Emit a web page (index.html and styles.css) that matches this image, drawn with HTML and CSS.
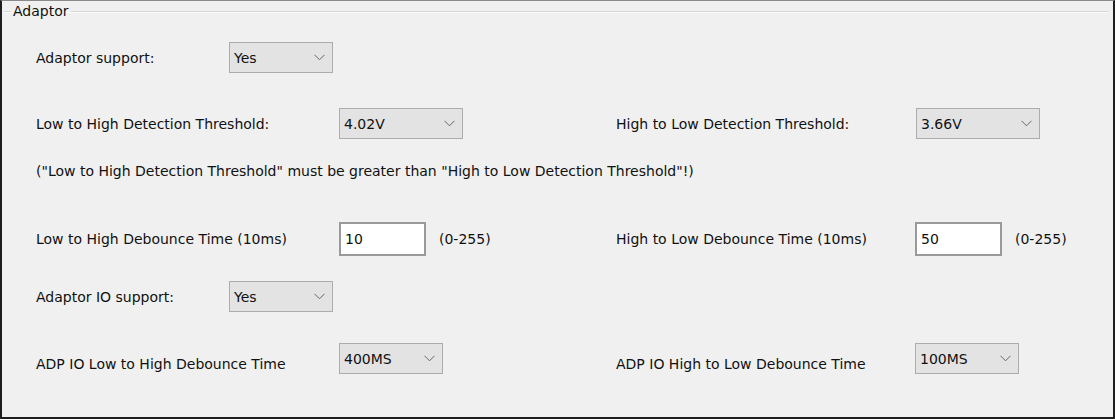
FILE: index.html
```html
<html lang="en"><head>
    <meta charset="UTF-8">
    <title>Adaptor</title>
    <link rel="stylesheet" href="styles.css">
</head>
<body>
    <div class="frame">
        <fieldset class="group">
            <legend>Adaptor</legend>

            <!-- Adaptor support -->
            <div class="row row-support">
                <span class="label label-short">Adaptor support:</span>
                <div class="combo combo-short"><span>Yes</span><svg width="11" height="7" viewBox="0 0 11 7"><polyline points="0.5,0.8 5.5,5.8 10.5,0.8" fill="none" stroke="#666" stroke-width="1"/></svg></div>
            </div>

            <!-- Detection thresholds -->
            <div class="row row-threshold">
                <div class="half">
                    <span class="label label-long">Low to High Detection Threshold:</span>
                    <div class="combo combo-wide"><span>4.02V</span><svg width="11" height="7" viewBox="0 0 11 7"><polyline points="0.5,0.8 5.5,5.8 10.5,0.8" fill="none" stroke="#666" stroke-width="1"/></svg></div>
                </div>
                <div class="half half-right">
                    <span class="label label-right">High to Low Detection Threshold:</span>
                    <div class="combo combo-wide"><span>3.66V</span><svg width="11" height="7" viewBox="0 0 11 7"><polyline points="0.5,0.8 5.5,5.8 10.5,0.8" fill="none" stroke="#666" stroke-width="1"/></svg></div>
                </div>
            </div>

            <p class="note">("Low to High Detection Threshold" must be greater than "High to Low Detection Threshold"!)</p>

            <!-- Debounce times -->
            <div class="row row-debounce">
                <div class="half">
                    <span class="label label-long">Low to High Debounce Time (10ms)</span>
                    <input type="text" class="num" value="10">
                    <span class="range">(0-255)</span>
                </div>
                <div class="half half-right">
                    <span class="label label-right label-tight">High to Low Debounce Time (10ms)</span>
                    <input type="text" class="num" value="50">
                    <span class="range">(0-255)</span>
                </div>
            </div>

            <!-- Adaptor IO -->
            <div class="row row-io">
                <span class="label label-short">Adaptor IO support:</span>
                <div class="combo combo-short"><span>Yes</span><svg width="11" height="7" viewBox="0 0 11 7"><polyline points="0.5,0.8 5.5,5.8 10.5,0.8" fill="none" stroke="#666" stroke-width="1"/></svg></div>
            </div>

            <div class="row row-adp">
                <div class="half">
                    <span class="label label-long label-low">ADP IO Low to High Debounce Time</span>
                    <div class="combo combo-short"><span>400MS</span><svg width="11" height="7" viewBox="0 0 11 7"><polyline points="0.5,0.8 5.5,5.8 10.5,0.8" fill="none" stroke="#666" stroke-width="1"/></svg></div>
                </div>
                <div class="half half-right">
                    <span class="label label-right label-tight label-low">ADP IO High to Low Debounce Time</span>
                    <div class="combo combo-short"><span>100MS</span><svg width="11" height="7" viewBox="0 0 11 7"><polyline points="0.5,0.8 5.5,5.8 10.5,0.8" fill="none" stroke="#666" stroke-width="1"/></svg></div>
                </div>
            </div>
        </fieldset>
    </div>
</body></html>
```

FILE: styles.css
```css
body {
    margin: 0;
    padding: 0;
    background-color: #f0f0f0;
    font-family: "DejaVu Sans", Tahoma, sans-serif;
    font-size: 14px;
    color: #111;
}
.frame {
    width: 1115px;
    height: 419px;
    box-sizing: border-box;
    border: 2px solid #1e1e1e;
    border-top: 1px solid #8a8a8a;
    background-color: #f0f0f0;
    padding: 2px 4px 0 1px;
    overflow: hidden;
}
.group {
    margin: 0;
    height: 390px;
    padding: 0 0 0 33px;
    border: none;
    border-top: 1px solid #d6d6d6;
    box-shadow: inset 0 1px 0 #fafafa;
}
.group legend {
    margin-left: -25px;
    padding: 0 2px;
    line-height: 16px;
}

.row {
    display: flex;
    align-items: center;
}
.half {
    display: flex;
    align-items: center;
    width: 580px;
    flex: none;
}
.half-right {
    flex: 1;
    width: auto;
    min-width: 0;
}
.label {
    flex: none;
}
.label-short {
    width: 193px;
}
.label-long {
    width: 303px;
}
.label-right {
    width: 300px;
}
.label-tight {
    width: 299px;
}
.label-low {
    padding-top: 10px;
}

.row-support {
    height: 31px;
    margin-top: 23px;
}
.row-threshold {
    height: 31px;
    margin-top: 35px;
}
.note {
    margin: 0;
    height: 31px;
    line-height: 31px;
    margin-top: 17px;
}
.row-debounce {
    height: 34px;
    margin-top: 35px;
}
.row-io {
    height: 31px;
    margin-top: 25px;
}
.row-adp {
    height: 31px;
    margin-top: 31px;
}

/* combo box look */
.combo {
    display: flex;
    align-items: center;
    justify-content: space-between;
    box-sizing: border-box;
    height: 31px;
    padding: 0 7px 0 4px;
    background-color: #e3e3e3;
    border: 1px solid #acacac;
}
.combo-short {
    width: 104px;
}
.combo-wide {
    width: 124px;
}

.num {
    box-sizing: border-box;
    width: 87px;
    height: 34px;
    padding: 0 4px;
    margin: 0;
    border: 2px solid #9a9a9a;
    background-color: #fff;
    font-family: "DejaVu Sans", Tahoma, sans-serif;
    font-size: 14px;
    color: #111;
    outline: none;
}
.range {
    margin-left: 13px;
}
```
